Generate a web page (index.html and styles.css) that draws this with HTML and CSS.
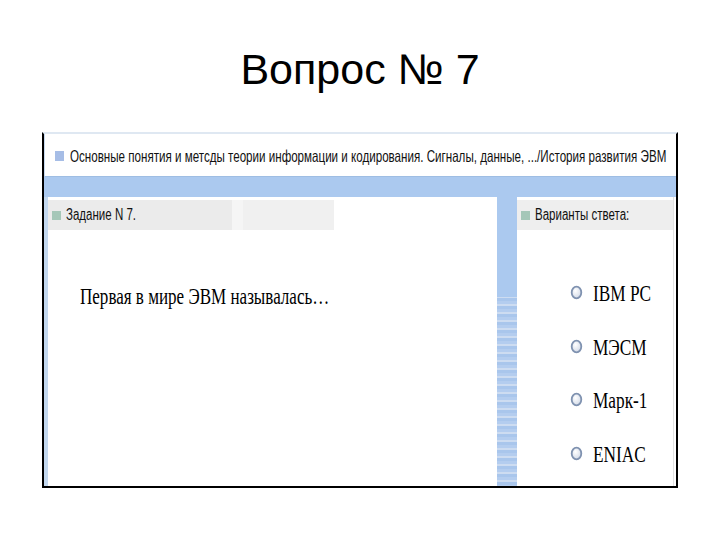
FILE: index.html
```html
<!DOCTYPE html>
<html lang="ru">
<head>
<meta charset="utf-8">
<title>Вопрос № 7</title>
<link rel="stylesheet" href="styles.css">
</head>
<body>
<div class="slide">
  <h1 class="title">Вопрос № 7</h1>
  <div class="frame">
    <div class="crumbs">
      <span class="mark mark-blue"></span>
      <span class="squish crumbs-text">Основные понятия и метсды теории информации и кодирования. Сигналы, данные, .../История развития ЭВМ</span>
    </div>
    <div class="band"></div>
    <div class="body">
      <div class="strip"></div>
      <div class="panel panel-task">
        <div class="phead phead-task">
          <span class="mark mark-green"></span>
          <span class="squish phead-text">Задание N 7.</span>
        </div>
        <div class="question"><span class="squish q-text">Первая в мире ЭВМ называлась…</span></div>
      </div>
      <div class="divider"></div>
      <div class="panel panel-answers">
        <div class="phead">
          <span class="mark mark-green"></span>
          <span class="squish phead-text">Варианты ствета:</span>
        </div>
        <ul class="options">
          <li class="option"><svg class="radio" width="13" height="15" viewBox="0 0 13 15"><defs><radialGradient id="rg" cx="0.4" cy="0.35" r="0.7"><stop offset="0" stop-color="#ffffff"/><stop offset="1" stop-color="#d0d8e6"/></radialGradient></defs><ellipse cx="6.5" cy="7.5" rx="4.8" ry="5.8" fill="url(#rg)" stroke="#7f92b0" stroke-width="1.8"/></svg><span class="squish opt-text">IBM PC</span></li>
          <li class="option"><svg class="radio" width="13" height="15" viewBox="0 0 13 15"><ellipse cx="6.5" cy="7.5" rx="4.8" ry="5.8" fill="url(#rg)" stroke="#7f92b0" stroke-width="1.8"/></svg><span class="squish opt-text">МЭСМ</span></li>
          <li class="option"><svg class="radio" width="13" height="15" viewBox="0 0 13 15"><ellipse cx="6.5" cy="7.5" rx="4.8" ry="5.8" fill="url(#rg)" stroke="#7f92b0" stroke-width="1.8"/></svg><span class="squish opt-text">Марк-1</span></li>
          <li class="option"><svg class="radio" width="13" height="15" viewBox="0 0 13 15"><ellipse cx="6.5" cy="7.5" rx="4.8" ry="5.8" fill="url(#rg)" stroke="#7f92b0" stroke-width="1.8"/></svg><span class="squish opt-text">ENIAC</span></li>
        </ul>
      </div>
      <div class="edge"></div>
    </div>
  </div>
</div>
</body>
</html>
```
FILE: styles.css
```css
html, body {
  margin: 0;
  padding: 0;
  background: #ffffff;
}
.slide {
  width: 720px;
  height: 540px;
  overflow: hidden;
}
.title {
  margin: 0;
  padding-top: 44px;
  height: 50px;
  line-height: 50px;
  font-family: "Liberation Sans", Arial, sans-serif;
  font-weight: normal;
  font-size: 43px;
  color: #000;
  text-align: center;
}
.frame {
  margin: 38px 0 0 42px;
  width: 632px;
  height: 352px;
  border-left: 2px solid #000;
  border-right: 2px solid #000;
  border-bottom: 2px solid #000;
  border-top: 2px solid #dfe8f2;
  display: flex;
  flex-direction: column;
}
.squish {
  display: inline-block;
  white-space: nowrap;
  transform-origin: 0 50%;
}
.crumbs {
  border-bottom: 1px solid #9ebde3;
  border-left: 1px solid #c8daf0;
  background: #ffffff;
  display: flex;
  align-items: center;
  padding-left: 10px;
  box-sizing: border-box;
  height: 43px;
  flex: none;
}
.crumbs-text {
  font-family: "Liberation Sans", Arial, sans-serif;
  font-size: 16.5px;
  color: #111;
  margin-left: 6px;
  transform: scaleX(0.703);
  margin-top: 2px;
}
.mark {
  display: inline-block;
  flex: none;
}
.mark-blue {
  width: 9px;
  height: 10px;
  background: #a6bde6;
  margin-top: 2px;
}
.mark-green {
  width: 9px;
  height: 9px;
  background: #a5c7b8;
}
.band {
  height: 20px;
  background: #abc9ef;
  flex: none;
}
.body {
  flex: 1;
  display: flex;
  min-height: 0;
}
.strip {
  width: 4px;
  background: #c3d8ef;
  flex: none;
}
.panel {
  background: #ffffff;
  padding-top: 3px;
  box-sizing: border-box;
}
.panel-task {
  width: 449px;
  flex: none;
}
.panel-answers {
  width: 156px;
  flex: none;
}
.divider {
  width: 20px;
  flex: none;
  background:
    linear-gradient(#abc9ef 0, #abc9ef 100px, transparent 100px),
    repeating-linear-gradient(#b4cdef 0, #b4cdef 3px, #cddcf1 3px, #cddcf1 5px, #a9c6ec 5px, #a9c6ec 8px);
}
.edge {
  width: 3px;
  flex: none;
  border-left: 1px solid #e2e2e2;
  box-sizing: border-box;
  background: #ffffff;
}
.phead {
  height: 30px;
  background: #eeeeee;
  display: flex;
  align-items: center;
  padding-left: 4px;
}
.phead-task {
  width: 282px;
  padding-left: 4px;
  background: linear-gradient(90deg, #ebebeb 0, #ebebeb 184px, #f5f5f5 184px, #f5f5f5 195px, #f0f0f0 195px, #f0f0f0 100%);
}
.phead-text {
  font-family: "Liberation Sans", Arial, sans-serif;
  font-size: 16px;
  color: #111;
  margin-left: 5px;
  transform: scaleX(0.72);
}
.question {
  padding: 53px 0 0 32px;
}
.q-text {
  font-family: "Liberation Serif", "Times New Roman", serif;
  font-size: 24px;
  color: #000;
  transform: scaleX(0.71);
}
.options {
  list-style: none;
  margin: 0;
  padding: 62px 0 0 53px;
}
.option {
  display: flex;
  align-items: center;
  height: 53.5px;
  margin-top: -26px;
  margin-bottom: 26px;
}
.radio {
  flex: none;
}
.opt-text {
  font-family: "Liberation Serif", "Times New Roman", serif;
  font-size: 24px;
  color: #000;
  margin-left: 10px;
  transform: scaleX(0.72);
  margin-top: 2px;
}
```
